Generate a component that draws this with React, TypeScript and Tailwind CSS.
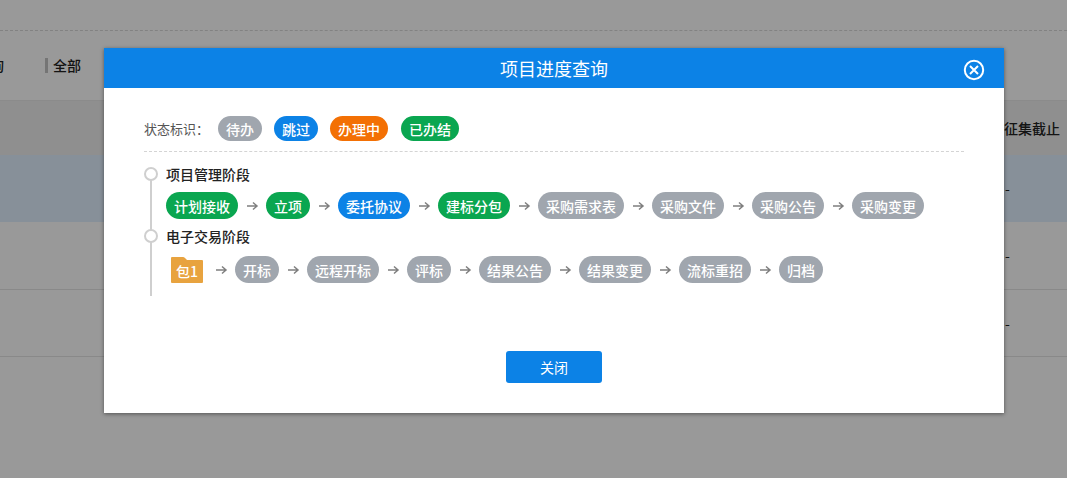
const font = { fontFamily: '"Noto Sans CJK SC", "Liberation Sans", sans-serif' };

const GRAY = "bg-[#a0a6ae]";
const GREEN = "bg-[#0aa650]";
const BLUE = "bg-[#0c82e6]";
const ORANGE = "bg-[#f37004]";

function Pill({ label, color, tall = true }: { label: string; color: string; tall?: boolean }) {
  return (
    <span
      className={`${color} ${tall ? "h-[27px]" : "h-[25px]"} inline-flex items-center rounded-[14px] px-2 text-[14px] leading-none font-medium whitespace-nowrap text-white`}
    >
      {label}
    </span>
  );
}

function Arrow() {
  return (
    <svg width="28" height="12" viewBox="0 0 28 12" fill="none" className="shrink-0">
      <path d="M9 6H19M15 2.5L19 6L15 9.5" stroke="#7f7f7f" strokeWidth="1.5" />
    </svg>
  );
}

function Dot() {
  return <span className="z-10 h-[14px] w-[14px] shrink-0 rounded-full border-2 border-[#cfcfcf] bg-white" />;
}

function Folder() {
  return (
    <div className="relative mr-[4px] ml-[5px] h-[26px] w-[32px] shrink-0">
      <svg width="32" height="26" viewBox="0 0 32 26" className="absolute inset-0">
        <path d="M0 1Q0 0 1 0H12Q13 0 14 1L16 3H31Q32 3 32 4V25Q32 26 31 26H1Q0 26 0 25Z" fill="#e8a33f" />
      </svg>
      <span className="absolute inset-0 flex items-center justify-center pt-[3px] text-[14px] leading-none font-medium text-white">包1</span>
    </div>
  );
}

function Row({ stages }: { stages: [string, string][] }) {
  return (
    <>
      {stages.map(([label, color], i) => (
        <div key={label} className="flex items-center">
          {i > 0 && <Arrow />}
          <Pill label={label} color={color} />
        </div>
      ))}
    </>
  );
}

export default function App() {
  return (
    <div style={font} className="relative h-[478px] w-[1067px] overflow-hidden bg-white text-[#222]">
      <div className="h-[31px] border-b border-dashed border-[#d9d9d9]" />
      <div className="flex h-[69px] items-center text-[14px] font-medium">
        <span className="ml-[-10px]">询</span>
        <span className="ml-[41px] h-[15px] w-[3px] bg-[#c4c4c4]" />
        <span className="ml-[5px]">全部</span>
      </div>
      <div className="flex h-[55px] items-center justify-end border-t border-[#e8e8e8] bg-[#eeeeee] pr-[7px] text-[14px] font-medium">征集截止</div>
      <div className="flex h-[67px] items-center bg-[#e1f0ff] pl-[1005px] text-[14px]">-</div>
      <div className="flex h-[68px] items-center border-b border-[#e5e5e5] pl-[1005px] text-[14px]">-</div>
      <div className="flex h-[67px] items-center border-b border-[#e5e5e5] pl-[1005px] text-[14px]">-</div>

      <div className="absolute inset-0 bg-black/40" />

      <div className="absolute top-[48px] left-[104px] flex h-[365px] w-[900px] flex-col bg-white shadow-[0_1px_4px_rgba(0,0,0,0.45)]">
        <div className="relative flex h-[40px] shrink-0 items-center justify-center bg-[#0c82e6] text-[18px] text-white">
          项目进度查询
          <svg width="22" height="22" viewBox="0 0 22 22" fill="none" className="absolute top-[11px] right-[19px]">
            <circle cx="11" cy="11" r="9.2" stroke="white" strokeWidth="2" />
            <path d="M7 7L15 15M15 7L7 15" stroke="white" strokeWidth="2" />
          </svg>
        </div>

        <div className="flex flex-1 flex-col px-[40px]">
          <div className="mt-[28px] flex h-[25px] items-center">
            <span className="w-[74px] text-[13px] text-[#555]">状态标识：</span>
            <div className="flex items-center gap-[12px]">
              <Pill label="待办" color={GRAY} tall={false} />
              <Pill label="跳过" color={BLUE} tall={false} />
              <Pill label="办理中" color={ORANGE} tall={false} />
              <span className="ml-[1px] flex">
                <Pill label="已办结" color={GREEN} tall={false} />
              </span>
            </div>
          </div>

          <div className="mt-[10px] border-t border-dashed border-[#d4d4d4]" />

          <div className="relative mt-[13px] h-[131px]">
            <div className="absolute top-[8px] bottom-0 left-[6px] w-[2px] bg-[#cfcfcf]" />
            <div className="flex h-[18px] items-center gap-[8px] font-medium text-[#222]">
              <Dot />
              <span className="text-[14px]">项目管理阶段</span>
            </div>
            <div className="mt-[9px] ml-[22px] flex items-center">
              <Row
                stages={[
                  ["计划接收", GREEN],
                  ["立项", GREEN],
                  ["委托协议", BLUE],
                  ["建标分包", GREEN],
                  ["采购需求表", GRAY],
                  ["采购文件", GRAY],
                  ["采购公告", GRAY],
                  ["采购变更", GRAY],
                ]}
              />
            </div>
            <div className="mt-[8px] flex h-[18px] items-center gap-[8px] font-medium text-[#222]">
              <Dot />
              <span className="text-[14px]">电子交易阶段</span>
            </div>
            <div className="mt-[11px] ml-[22px] flex items-center">
              <Folder />
              <Arrow />
              <Row
                stages={[
                  ["开标", GRAY],
                  ["远程开标", GRAY],
                  ["评标", GRAY],
                  ["结果公告", GRAY],
                  ["结果变更", GRAY],
                  ["流标重招", GRAY],
                  ["归档", GRAY],
                ]}
              />
            </div>
          </div>

          <div className="mt-[55px] flex justify-center">
            <button className="h-[32px] w-[96px] rounded-[3px] bg-[#0c82e6] text-[14px] text-white">关闭</button>
          </div>
        </div>
      </div>
    </div>
  );
}
